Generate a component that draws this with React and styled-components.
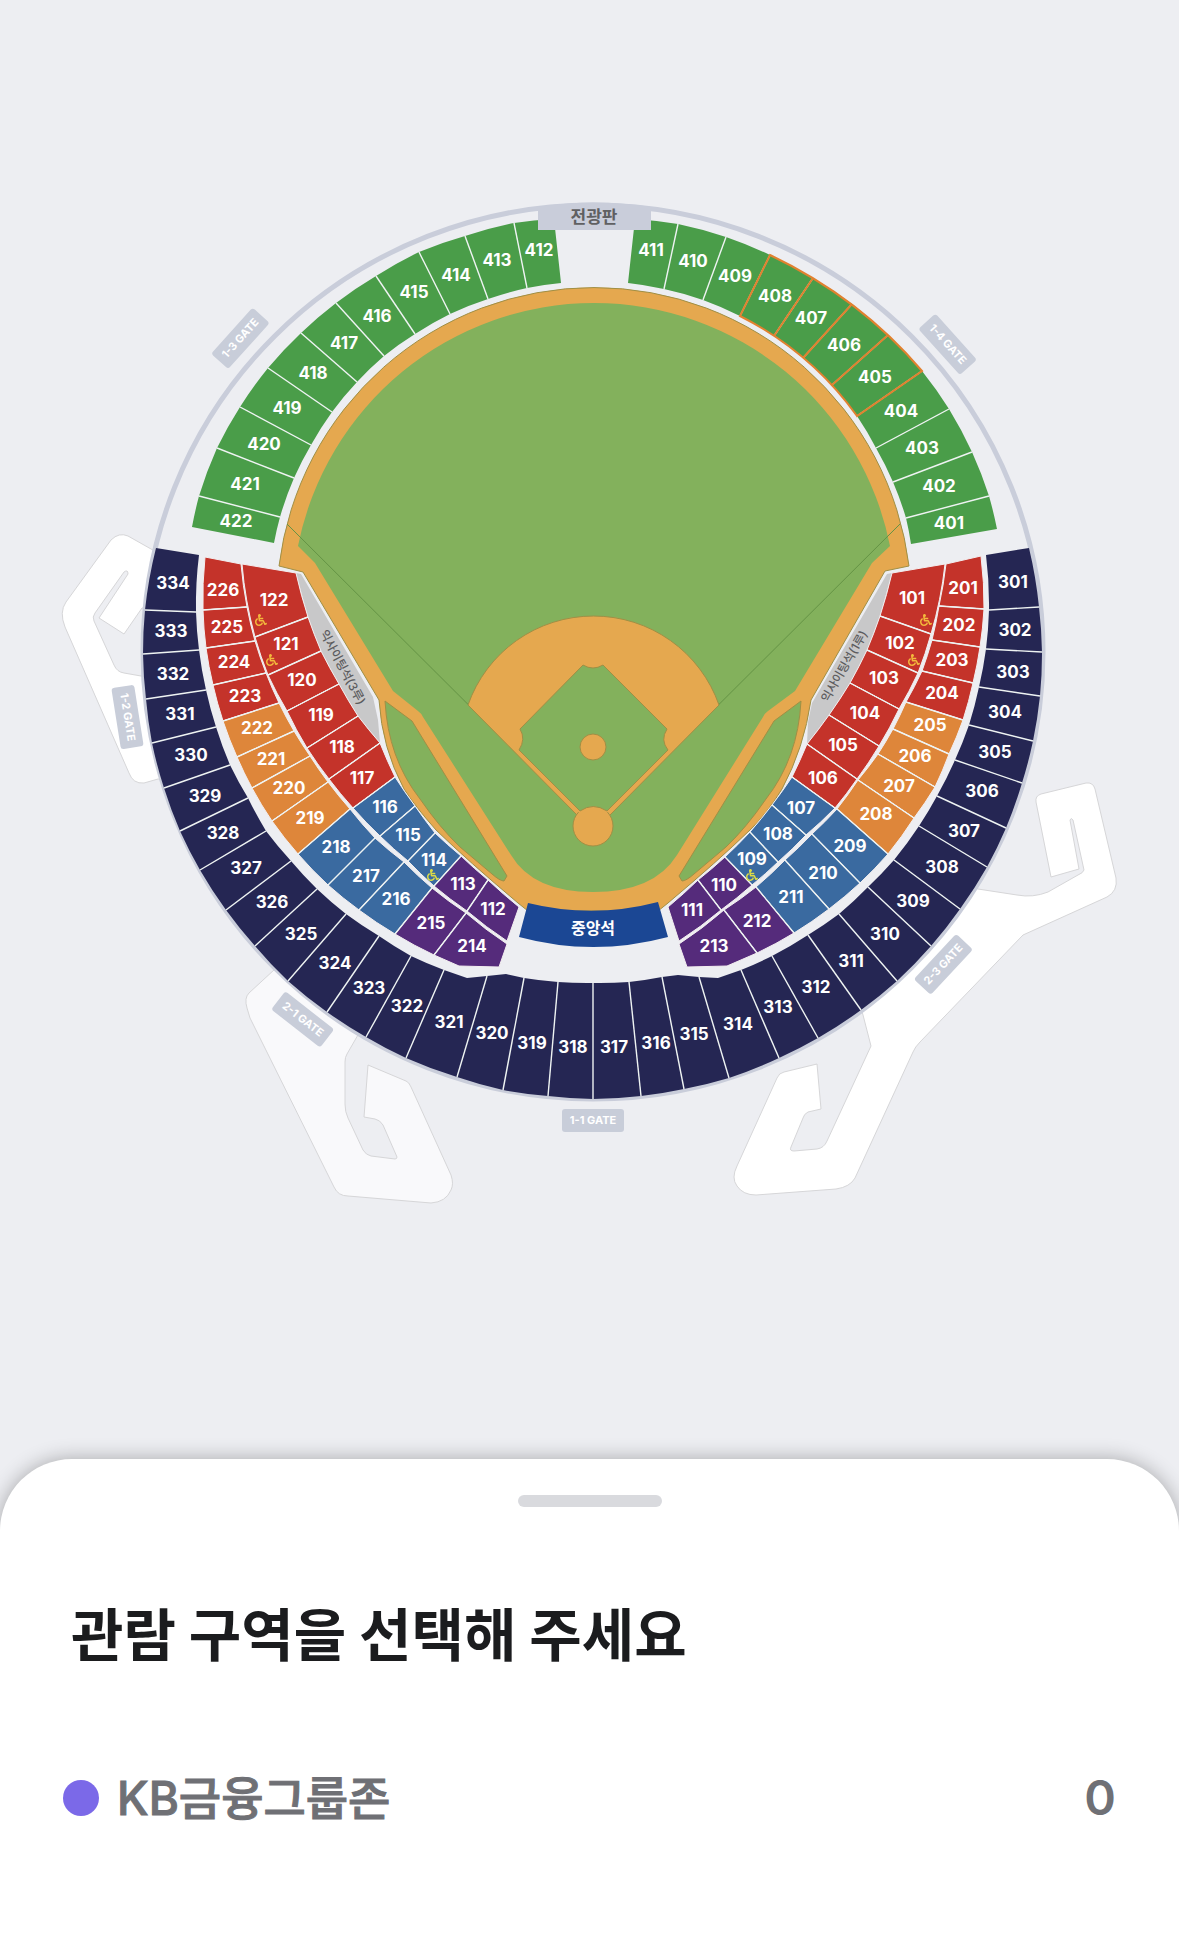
import styled, { createGlobalStyle } from 'styled-components'
import { FaWheelchair } from 'react-icons/fa'

const colors = {
    background: '#edeef2',
    ring: '#c9cdda',
    badge: '#c8cdd9',
    grass: '#83b15c',
    dirt: '#e5a84f',
    green: '#4a9d49',
    navy: '#252653',
    red: '#c4332a',
    orange: '#de863a',
    blue: '#3a6aa0',
    purple: '#552b7b',
    center: '#1b4794',
    field: '#c8c8c9',
    highlight: '#e1812f',
    edge: '#a08f45',
}

const GlobalStyle = createGlobalStyle`
    * {
        box-sizing: border-box;
    }
    body {
        margin: 0;
        background-color: ${colors.background};
        font-family: Inter, 'Noto Sans CJK KR', sans-serif;
    }
`

const Screen = styled.div`
    display: flex;
    flex-direction: column;
    min-height: 100vh;
`

const StadiumMap = styled.svg`
    display: block;
    width: 100%;
    height: auto;
`

const Walkway = styled.path`
    fill: ${({ $soft }) => ($soft ? '#f9f9fb' : '#ffffff')};
    stroke: #d6d6d8;
    stroke-width: 1px;
`

const SectionShape = styled.path`
    fill: ${({ $color }) => colors[$color]};
    stroke: ${({ $outlined }) => ($outlined ? '#f3eef0' : 'none')};
    stroke-width: 1px;
`

const Divider = styled.line`
    stroke: #eef3f2;
    stroke-width: 1.4px;
`

const Highlight = styled.path`
    fill: none;
    stroke: ${colors.highlight};
    stroke-width: 2px;
`

const MapText = styled.text`
    fill: ${({ $color }) => $color || '#ffffff'};
    font-size: ${({ $size }) => $size || 17}px;
    font-weight: ${({ $weight }) => $weight || 700};
    text-anchor: middle;
    dominant-baseline: central;
`

const FieldShape = styled.path`
    fill: ${({ $color }) => colors[$color]};
    stroke: ${({ $edge }) => ($edge ? colors.edge : 'none')};
    stroke-width: 1px;
`

const Sheet = styled.section`
    display: flex;
    flex-direction: column;
    flex: 1;
    padding: 36px 63px 98px;
    border-radius: 72px 72px 0 0;
    background-color: #ffffff;
    box-shadow: 0 0 20px rgba(0, 0, 0, 0.3);
`

const Handle = styled.button`
    align-self: center;
    width: 144px;
    height: 12px;
    padding: 0;
    border: none;
    border-radius: 6px;
    background-color: #d9dade;
`

const SheetTitle = styled.h1`
    margin: 82px 0 0;
    padding-left: 8px;
    color: #1b1c1e;
    font-family: 'Noto Sans CJK KR', sans-serif;
    font-size: 57px;
    font-weight: 700;
    line-height: 84px;
`

const ZoneList = styled.ul`
    margin: 92px 0 0;
    padding: 0;
    list-style: none;
`

const ZoneRow = styled.li`
    display: flex;
    align-items: center;
    color: #6f7075;
    line-height: 66px;
`

const ZoneDot = styled.span`
    width: 36px;
    height: 36px;
    margin-right: 18px;
    border-radius: 50%;
    background-color: ${({ $color }) => $color};
`

const ZoneName = styled.span`
    font-size: 46px;
    font-weight: 500;
    -webkit-text-stroke: 1px currentColor;
`

const ZoneCount = styled.span`
    margin-left: auto;
    font-size: 48px;
    font-weight: 600;
`

// Each cut is [outer x, outer y, inner x, inner y], two cuts enclose one section
const blocks = [
    {
        outer: 417,
        inner: 324,
        sweep: 1,
        cuts: [
            [635, 219, 628, 283], [678, 224, 664, 289], [726, 237, 703, 300],
            [770, 255, 740, 316], [813, 278, 774, 336], [852, 304, 803, 358],
            [888, 335, 832, 385], [922, 371, 857, 416], [949, 409, 876, 448],
            [972, 452, 893, 482], [989, 496, 906, 518], [997, 529, 911, 544],
        ],
        sections: [
            ['411', 651, 250, 'green'], ['410', 693, 261, 'green'],
            ['409', 735, 276, 'green'], ['408', 775, 296, 'green'],
            ['407', 811, 318, 'green'], ['406', 844, 345, 'green'],
            ['405', 875, 377, 'green'], ['404', 901, 411, 'green'],
            ['403', 922, 448, 'green'], ['402', 939, 486, 'green'],
            ['401', 949, 523, 'green'],
        ],
    },
    {
        outer: 417,
        inner: 324,
        sweep: 0,
        cuts: [
            [554, 219, 561, 283], [514, 223, 527, 288], [465, 236, 488, 299],
            [419, 252, 450, 314], [376, 276, 415, 334], [336, 303, 384, 356],
            [301, 333, 357, 382], [268, 368, 332, 412], [240, 407, 311, 445],
            [217, 448, 294, 478], [199, 496, 280, 517], [192, 527, 274, 543],
        ],
        sections: [
            ['412', 539, 250, 'green'], ['413', 497, 260, 'green'],
            ['414', 456, 275, 'green'], ['415', 414, 292, 'green'],
            ['416', 377, 316, 'green'], ['417', 344, 343, 'green'],
            ['418', 313, 373, 'green'], ['419', 287, 408, 'green'],
            ['420', 264, 444, 'green'], ['421', 245, 484, 'green'],
            ['422', 236, 521, 'green'],
        ],
    },
    {
        outer: 448,
        inner: 397,
        sweep: 1,
        cuts: [
            [1029, 548, 986, 555], [1039, 607, 989, 610], [1042, 652, 986, 649],
            [1040, 696, 979, 687], [1033, 741, 969, 725], [1022, 783, 955, 760],
            [1006, 828, 937, 796], [987, 867, 919, 826], [960, 909, 894, 860],
            [931, 946, 868, 887], [897, 981, 839, 914], [861, 1010, 808, 935],
            [818, 1038, 772, 956], [779, 1058, 741, 970], [729, 1078, 699, 977],
            [684, 1089, 662, 977], [641, 1096, 629, 982], [593, 1099, 593, 983],
            [548, 1096, 558, 982], [503, 1090, 524, 978], [457, 1077, 487, 976],
            [406, 1058, 444, 970], [366, 1037, 411, 956], [327, 1012, 379, 936],
            [288, 981, 346, 914], [255, 946, 317, 889], [226, 910, 291, 861],
            [200, 870, 266, 831], [180, 831, 248, 798], [164, 788, 230, 765],
            [152, 743, 216, 727], [146, 699, 206, 690], [143, 654, 199, 650],
            [145, 610, 196, 612], [156, 548, 199, 555],
        ],
        innerKinks: {
            314: [718, 978],
            315: [678, 975],
            320: [506, 974],
            321: [467, 978],
        },
        sections: [
            ['301', 1013, 582, 'navy'], ['302', 1015, 630, 'navy'],
            ['303', 1013, 672, 'navy'], ['304', 1005, 712, 'navy'],
            ['305', 995, 752, 'navy'], ['306', 982, 791, 'navy'],
            ['307', 964, 831, 'navy'], ['308', 942, 867, 'navy'],
            ['309', 913, 901, 'navy'], ['310', 885, 934, 'navy'],
            ['311', 851, 961, 'navy'], ['312', 816, 987, 'navy'],
            ['313', 778, 1007, 'navy'], ['314', 738, 1024, 'navy'],
            ['315', 694, 1034, 'navy'], ['316', 656, 1043, 'navy'],
            ['317', 614, 1047, 'navy'], ['318', 573, 1047, 'navy'],
            ['319', 532, 1043, 'navy'], ['320', 492, 1033, 'navy'],
            ['321', 449, 1022, 'navy'], ['322', 407, 1006, 'navy'],
            ['323', 369, 988, 'navy'], ['324', 335, 963, 'navy'],
            ['325', 301, 934, 'navy'], ['326', 272, 902, 'navy'],
            ['327', 246, 868, 'navy'], ['328', 223, 833, 'navy'],
            ['329', 205, 796, 'navy'], ['330', 191, 755, 'navy'],
            ['331', 180, 714, 'navy'], ['332', 173, 674, 'navy'],
            ['333', 171, 631, 'navy'], ['334', 173, 583, 'navy'],
        ],
    },
    {
        outer: 392,
        inner: 400,
        sweep: 1,
        outlined: true,
        cuts: [
            [981, 556, 946, 564], [984, 609, 939, 606], [980, 647, 932, 640],
            [973, 683, 922, 671], [963, 720, 906, 702], [949, 754, 893, 729],
            [935, 787, 878, 754], [914, 818, 858, 780], [888, 854, 837, 809],
            [860, 883, 812, 834], [829, 909, 785, 860], [794, 933, 756, 887],
            [757, 953, 724, 910], [687, 967, 679, 944],
        ],
        outerKinks: { 213: [727, 966] },
        sections: [
            ['201', 963, 588, 'red'], ['202', 959, 625, 'red'],
            ['203', 952, 660, 'red'], ['204', 942, 693, 'red'],
            ['205', 930, 725, 'orange'], ['206', 915, 756, 'orange'],
            ['207', 899, 786, 'orange'], ['208', 876, 814, 'orange'],
            ['209', 850, 846, 'blue'], ['210', 823, 873, 'blue'],
            ['211', 791, 897, 'blue'], ['212', 757, 921, 'purple'],
            ['213', 714, 946, 'purple'],
        ],
    },
    {
        outer: 400,
        inner: 500,
        sweep: 1,
        outlined: true,
        cuts: [
            [945, 564, 892, 573], [931, 634, 880, 616], [918, 673, 867, 650],
            [899, 709, 850, 683], [879, 746, 829, 715], [857, 779, 807, 744],
            [835, 808, 792, 777], [806, 835, 772, 805], [778, 862, 750, 832],
            [752, 885, 725, 857], [721, 910, 698, 880], [679, 941, 668, 907],
        ],
        sections: [
            ['101', 912, 598, 'red'], ['102', 900, 643, 'red'],
            ['103', 884, 678, 'red'], ['104', 865, 713, 'red'],
            ['105', 843, 745, 'red'], ['106', 823, 778, 'red'],
            ['107', 801, 808, 'blue'], ['108', 778, 834, 'blue'],
            ['109', 752, 859, 'blue'], ['110', 724, 885, 'purple'],
            ['111', 692, 910, 'purple'],
        ],
    },
    {
        outer: 392,
        inner: 400,
        sweep: 0,
        outlined: true,
        cuts: [
            [205, 557, 241, 564], [203, 610, 247, 607], [206, 648, 255, 641],
            [213, 685, 266, 673], [223, 721, 279, 703], [237, 757, 294, 731],
            [252, 788, 310, 756], [272, 821, 328, 782], [298, 854, 350, 809],
            [328, 885, 375, 838], [359, 910, 404, 862], [395, 934, 432, 888],
            [434, 955, 466, 913], [499, 967, 507, 944],
        ],
        outerKinks: { 214: [459, 966] },
        sections: [
            ['226', 223, 590, 'red'], ['225', 227, 627, 'red'],
            ['224', 234, 662, 'red'], ['223', 245, 696, 'red'],
            ['222', 257, 728, 'orange'], ['221', 271, 759, 'orange'],
            ['220', 289, 788, 'orange'], ['219', 310, 818, 'orange'],
            ['218', 336, 847, 'blue'], ['217', 366, 876, 'blue'],
            ['216', 396, 899, 'blue'], ['215', 431, 923, 'purple'],
            ['214', 472, 946, 'purple'],
        ],
    },
    {
        outer: 400,
        inner: 500,
        sweep: 0,
        outlined: true,
        cuts: [
            [242, 564, 296, 573], [255, 637, 308, 617], [268, 675, 321, 651],
            [287, 711, 339, 684], [307, 748, 358, 716], [329, 779, 380, 743],
            [353, 808, 395, 777], [380, 836, 415, 806], [408, 861, 435, 833],
            [434, 886, 461, 856], [467, 911, 488, 880], [507, 941, 519, 907],
        ],
        sections: [
            ['122', 274, 600, 'red'], ['121', 286, 644, 'red'],
            ['120', 302, 680, 'red'], ['119', 321, 715, 'red'],
            ['118', 342, 747, 'red'], ['117', 362, 778, 'red'],
            ['116', 385, 807, 'blue'], ['115', 408, 835, 'blue'],
            ['114', 434, 860, 'blue'], ['113', 463, 884, 'purple'],
            ['112', 493, 909, 'purple'],
        ],
    },
]

const gates = [
    { name: '1-1 GATE', x: 593, y: 1120, angle: 0 },
    { name: '1-2 GATE', x: 128, y: 717, angle: 81 },
    { name: '1-3 GATE', x: 240, y: 338, angle: -48 },
    { name: '1-4 GATE', x: 948, y: 344, angle: 48 },
    { name: '2-1 GATE', x: 303, y: 1019, angle: 38 },
    { name: '2-3 GATE', x: 943, y: 964, angle: -47 },
]

const wheelchairSeats = [
    { x: 261, y: 620, color: '#f3b93c' },
    { x: 272, y: 660, color: '#f3b93c' },
    { x: 926, y: 620, color: '#f3b93c' },
    { x: 914, y: 660, color: '#f3b93c' },
    { x: 433, y: 875, color: '#dcdc46' },
    { x: 752, y: 875, color: '#dcdc46' },
]

const zones = [{ name: 'KB금융그룹존', color: '#7b69e8', count: 0 }]

function edge(radius, sweep, x, y, kink) {
    return kink
        ? `L${kink[0]} ${kink[1]} L${x} ${y}`
        : `A${radius} ${radius} 0 0 ${sweep} ${x} ${y}`
}

function sectionPath(block, index) {
    const [ox1, oy1, ix1, iy1] = block.cuts[index]
    const [ox2, oy2, ix2, iy2] = block.cuts[index + 1]
    const name = block.sections[index][0]

    return [
        `M${ox1} ${oy1}`,
        edge(block.outer, block.sweep, ox2, oy2, block.outerKinks?.[name]),
        `L${ix2} ${iy2}`,
        edge(block.inner, 1 - block.sweep, ix1, iy1, block.innerKinks?.[name]),
        'Z',
    ].join(' ')
}

function SeatBlock({ block }) {
    return (
        <g>
            {block.sections.map(([name, , , color], index) => (
                <SectionShape
                    key={name}
                    $color={color}
                    $outlined={block.outlined}
                    d={sectionPath(block, index)}
                />
            ))}
            {block.cuts.slice(1, -1).map(([x1, y1, x2, y2]) => (
                <Divider key={`${x1}-${y1}`} x1={x1} y1={y1} x2={x2} y2={y2} />
            ))}
            {block.sections.map(([name, x, y]) => (
                <MapText key={name} x={x} y={y}>
                    {name}
                </MapText>
            ))}
        </g>
    )
}

function Gate({ name, x, y, angle }) {
    return (
        <g transform={`translate(${x} ${y}) rotate(${angle})`}>
            <rect x="-31" y="-11" width="62" height="23" rx="3" fill={colors.badge} />
            <MapText $size={11} x="0" y="0">
                {name}
            </MapText>
        </g>
    )
}

function Walkways() {
    return (
        <g>
            <Walkway d="M200 575 L151 549 L128 536 Q119 532 111 540 L66 602 Q59 612 65 627 L129 773 Q133 784 144 783 L158 779 H200 V676 H141 L124 673 Q117 672 114 665 L94 621 Q92 617 95 613 L124 572 Q128 569 128 574 L99 618 L124 634 L142 608 H200 Z" />
            <Walkway
                $soft
                d="M300 946 L249 993 Q244 998 247 1008 L250 1018 L334 1187 Q338 1196 348 1196 L431 1203 Q446 1202 451 1190 Q454 1184 451 1175 L411 1087 Q409 1082 406 1081 L368 1065 L364 1117 L375 1119 Q380 1120 383 1125 L397 1157 Q397 1159 395 1159 L371 1156 Q366 1155 363 1150 L348 1118 Q345 1112 345 1104 V1062 Q345 1057 347 1054 L370 1014 Z"
            />
            <Walkway d="M850 970 L863 1015 L871 1046 L827 1141 Q824 1148 817 1149 L794 1151 Q789 1151 791 1147 L803 1118 Q804 1114 808 1112 L821 1109 L817 1064 L784 1072 Q779 1073 777 1078 L737 1166 Q731 1178 737 1186 Q743 1195 756 1195 L836 1189 Q850 1187 855 1178 L913 1052 Q915 1047 920 1042 L1023 935 L1107 897 Q1118 891 1116 878 L1095 789 Q1093 782 1086 783 L1041 794 Q1035 796 1036 802 L1051 877 L1079 869 L1070 820 Q1071 817 1073 820 L1084 870 Q1083 873 1078 875 L1048 892 Q1033 898 1017 895 L978 889 L940 880 Z" />
        </g>
    )
}

function Bullpen() {
    return (
        <FieldShape
            $color="grass"
            $edge
            d="M385 701 L412 721 L507 876 L504 881 Q500 881 492 874 L460 847 Q440 828 420 799 Q388 758 385 701 Z"
        />
    )
}

function Field() {
    return (
        <g>
            <FieldShape
                $color="dirt"
                $edge
                d="M279 566 A317.4 317.4 0 0 1 909 566 L885 571 L811 700 Q804 748 782 789 Q766 815 750 830 Q718 861 668 903 L658 911 H528 L518 903 Q468 861 436 830 Q414 805 404 789 Q382 748 379 700 L303 572 Z"
            />
            <FieldShape
                $color="grass"
                d="M298 546 A301.8 301.8 0 0 1 890 546 L872 563 L795 691 L768 711 Q765 713 763 717 L677 855 Q654 892 593 892 Q533 892 511 855 L423 717 Q421 713 418 711 L393 691 L315 563 Z"
            />
            <path
                d="M287 524 L580 816 M900 524 L607 816"
                fill="none"
                stroke="#649345"
                strokeWidth="1"
            />
            <Bullpen />
            <g transform="translate(1186 0) scale(-1 1)">
                <Bullpen />
            </g>
            <FieldShape
                $color="dirt"
                $edge
                d="M468 705 A133 133 0 0 1 719 705 L610 815 L593 826 L577 815 Z"
            />
            <circle cx="593" cy="826" r="20" fill={colors.dirt} stroke={colors.edge} />
            <path d="M572 806 L593 826 L614 806 L610 801 H577 Z" fill={colors.dirt} />
            <FieldShape
                $color="grass"
                $edge
                d="M583 665 Q593 671 603 665 L667 729 Q660 740 668 750 L607 811 Q593 802 580 811 L519 750 Q526 739 520 729 Z"
            />
            <circle cx="593" cy="747" r="13" fill={colors.dirt} stroke={colors.edge} />
        </g>
    )
}

function Stadium() {
    return (
        <StadiumMap viewBox="0 0 1179 1459" role="img">
            <Walkways />
            <ellipse
                cx="593"
                cy="652"
                rx="450"
                ry="447"
                fill={colors.background}
                stroke={colors.ring}
                strokeWidth="5"
            />
            <Field />
            <FieldShape
                $color="field"
                d="M296 573 L301 574 L373 697 L378 720 L380 743 L358 716 L339 684 L321 651 L308 617 Z"
            />
            <FieldShape
                $color="field"
                d="M892 573 L887 574 L812 703 L808 722 L807 744 L829 715 L850 683 L867 650 L880 616 Z"
            />
            {blocks.map((block) => (
                <SeatBlock key={block.sections[0][0]} block={block} />
            ))}
            <Highlight d="M770 255 Q860 298 922 371 L857 416 Q811 352 740 316 Z" />
            <Highlight d="M813 278 L774 336 M852 304 L803 358 M888 335 L832 385" />
            <FieldShape
                $color="center"
                d="M528 903 Q593 919 658 902 L668 937 Q593 957 519 937 Z"
            />
            <MapText $size={16} $weight={600} x="593" y="928">
                중앙석
            </MapText>
            <FieldShape $color="ring" d="M538 207 Q594 198 651 207 V230 H538 Z" />
            <MapText $color="#606062" $size={17} $weight={600} x="594" y="217">
                전광판
            </MapText>
            <g transform="translate(343 667) rotate(62)">
                <MapText $color="#5c5c5e" $size={12} $weight={500} x="0" y="0">
                    익사이팅석(3루)
                </MapText>
            </g>
            <g transform="translate(844 666) rotate(-60)">
                <MapText $color="#5c5c5e" $size={12} $weight={500} x="0" y="0">
                    익사이팅석(1루)
                </MapText>
            </g>
            {wheelchairSeats.map(({ x, y, color }) => (
                <FaWheelchair key={`${x}-${y}`} x={x - 6} y={y - 6} size={12} color={color} />
            ))}
            {gates.map((gate) => (
                <Gate key={gate.name} {...gate} />
            ))}
        </StadiumMap>
    )
}

function App() {
    return (
        <Screen>
            <GlobalStyle />
            <Stadium />
            <Sheet>
                <Handle type="button" aria-label="목록 펼치기" />
                <SheetTitle>관람 구역을 선택해 주세요</SheetTitle>
                <ZoneList>
                    {zones.map(({ name, color, count }) => (
                        <ZoneRow key={name}>
                            <ZoneDot $color={color} />
                            <ZoneName>{name}</ZoneName>
                            <ZoneCount>{count}</ZoneCount>
                        </ZoneRow>
                    ))}
                </ZoneList>
            </Sheet>
        </Screen>
    )
}

export default App
